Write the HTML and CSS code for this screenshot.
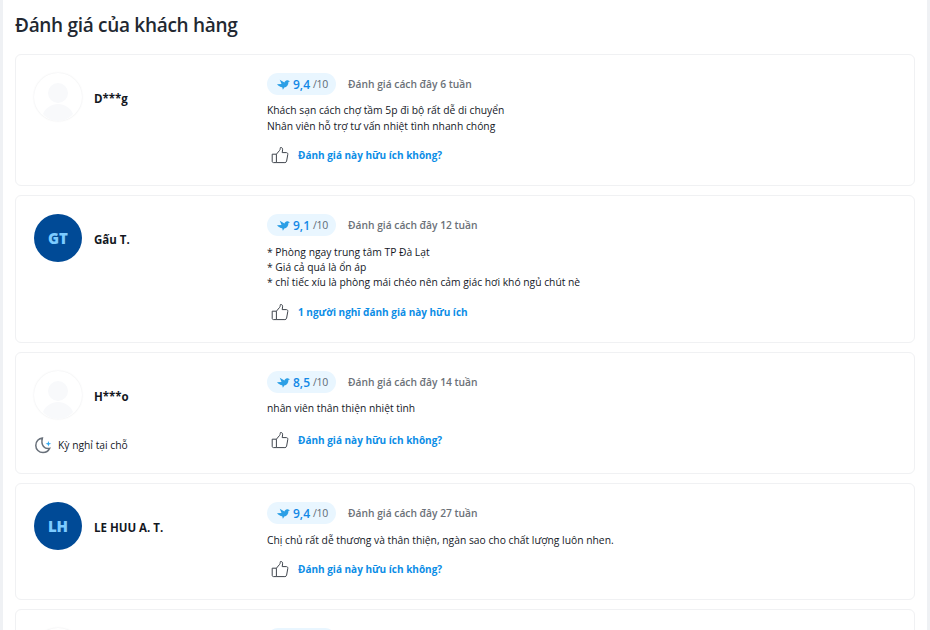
FILE: index.html
```html
<!DOCTYPE html>
<html lang="vi">
<head>
<meta charset="utf-8">
<title>Đánh giá của khách hàng</title>
<link rel="stylesheet" href="styles.css">
</head>
<body>
<svg class="defs" width="0" height="0" aria-hidden="true">
  <symbol id="bird" viewBox="0 0 15 12">
    <path d="M0 5.6 L5.2 5.4 L3.2 0.6 L8.6 3.6 C9.2 1.8 10.8 0.6 12.4 1.2 L15 2.2 L13.2 3.2 C13.4 6.6 11.2 9 8.4 9.6 L6.8 12 L6 9.2 C3.8 8.8 1.8 7.6 0 5.6 Z"/>
  </symbol>
  <symbol id="thumb" viewBox="0 0 18 18">
    <path d="M1.2 8.2 H5.4 V16.6 H2.4 C1.7 16.6 1.2 16.1 1.2 15.4 Z M5.4 8.2 L8.6 4.4 C9 3.9 9.2 3.2 9.2 2.6 L9.4 1.6 C10.8 1.2 11.8 2.2 11.6 3.8 L11.2 6.6 H15.4 C16.4 6.6 17 7.4 16.8 8.4 L15.6 15.2 C15.4 16.1 14.8 16.6 13.9 16.6 H5.4" />
  </symbol>
  <symbol id="person" viewBox="0 0 48 48">
    <circle cx="24" cy="20" r="10"/>
    <path d="M9 41 C11 35.5 17 31 24 31 C31 31 37 35.5 39 41 C35 45.8 30 48 24 48 C18 48 13 45.8 9 41 Z"/>
  </symbol>
</svg>
<main class="panel">
  <h2 class="title">Đánh giá của khách hàng</h2>

  <article class="card">
    <div class="author">
      <div class="who">
        <div class="avatar ghost"><svg class="person"><use href="#person"/></svg></div>
        <span class="name">D***g</span>
      </div>
    </div>
    <div class="review">
      <div class="meta">
        <span class="score"><svg class="bird"><use href="#bird"/></svg><b>9,4</b><small>/10</small></span>
        <span class="date">Đánh giá cách đây 6 tuần</span>
      </div>
      <p class="text">Khách sạn cách chợ tầm 5p đi bộ rất dễ di chuyển<br>Nhân viên hỗ trợ tư vấn nhiệt tình nhanh chóng</p>
      <div class="helpful"><svg class="thumb"><use href="#thumb"/></svg><a class="link">Đánh giá này hữu ích không?</a></div>
    </div>
  </article>

  <article class="card">
    <div class="author">
      <div class="who">
        <div class="avatar">GT</div>
        <span class="name">Gấu T.</span>
      </div>
    </div>
    <div class="review">
      <div class="meta">
        <span class="score"><svg class="bird"><use href="#bird"/></svg><b>9,1</b><small>/10</small></span>
        <span class="date">Đánh giá cách đây 12 tuần</span>
      </div>
      <p class="text">* Phòng ngay trung tâm TP Đà Lạt<br>* Giá cả quá là ổn áp<br>* chỉ tiếc xíu là phòng mái chéo nên cảm giác hơi khó ngủ chút nè</p>
      <div class="helpful"><svg class="thumb"><use href="#thumb"/></svg><a class="link">1 người nghĩ đánh giá này hữu ích</a></div>
    </div>
  </article>

  <article class="card">
    <div class="author">
      <div class="who">
        <div class="avatar ghost"><svg class="person"><use href="#person"/></svg></div>
        <span class="name">H***o</span>
      </div>
      <div class="stay">
        <svg class="moon" viewBox="0 0 18 18"><path class="moon-body" d="M8.4 2 C4.8 2.4 1.8 5.4 1.8 9.4 C1.8 13.4 5 16.6 9 16.6 C12 16.6 14.4 15 15.6 12.4 C11 13.4 6.4 9.6 8.4 2 Z"/><path class="moon-star" d="M14.4 5 L15.1 7.1 L17.2 7.8 L15.1 8.5 L14.4 10.6 L13.7 8.5 L11.6 7.8 L13.7 7.1 Z"/></svg>
        <span>Kỳ nghỉ tại chỗ</span>
      </div>
    </div>
    <div class="review">
      <div class="meta">
        <span class="score"><svg class="bird"><use href="#bird"/></svg><b>8,5</b><small>/10</small></span>
        <span class="date">Đánh giá cách đây 14 tuần</span>
      </div>
      <p class="text">nhân viên thân thiện nhiệt tình</p>
      <div class="helpful helpful-low"><svg class="thumb"><use href="#thumb"/></svg><a class="link">Đánh giá này hữu ích không?</a></div>
    </div>
  </article>

  <article class="card">
    <div class="author">
      <div class="who">
        <div class="avatar">LH</div>
        <span class="name">LE HUU A. T.</span>
      </div>
    </div>
    <div class="review">
      <div class="meta">
        <span class="score"><svg class="bird"><use href="#bird"/></svg><b>9,4</b><small>/10</small></span>
        <span class="date">Đánh giá cách đây 27 tuần</span>
      </div>
      <p class="text">Chị chủ rất dễ thương và thân thiện, ngàn sao cho chất lượng luôn nhen.</p>
      <div class="helpful"><svg class="thumb"><use href="#thumb"/></svg><a class="link">Đánh giá này hữu ích không?</a></div>
    </div>
  </article>

  <article class="card">
    <div class="author">
      <div class="who">
        <div class="avatar ghost"><svg class="person"><use href="#person"/></svg></div>
      </div>
    </div>
    <div class="review">
      <div class="meta">
        <span class="score"></span>
      </div>
    </div>
  </article>
</main>
</body>
</html>
```

FILE: styles.css
```css
* { box-sizing: border-box; }

html, body {
  margin: 0;
  height: 630px;
  overflow: hidden;
}

body {
  background: #eff1f4;
  font-family: "Open Sans", "Noto Sans", sans-serif;
  color: #14181f;
}

.defs { position: absolute; }

.panel {
  margin: 0 3px;
  height: 630px;
  background: #fff;
  padding: 0 12px;
  overflow: hidden;
}

.title {
  margin: 0;
  padding-top: 12px;
  height: 54px;
  font-size: 19px;
  line-height: 27px;
  font-weight: 600;
  letter-spacing: -0.3px;
  color: #222831;
}

.card {
  display: flex;
  margin-bottom: 9.2px;
  padding: 18px 18px 19px;
  border: 1px solid #f0f1f3;
  border-radius: 6px;
  background: #fff;
}

.author {
  width: 233px;
  flex: none;
}

.who {
  display: flex;
  align-items: center;
  gap: 12px;
}

.avatar {
  width: 48px;
  height: 48px;
  flex: none;
  border-radius: 50%;
  background: #004a96;
  color: #7ccbff;
  font-size: 15px;
  font-weight: 800;
  line-height: 48px;
  text-align: center;
  overflow: hidden;
}

.avatar.ghost {
  background: #fff;
  box-shadow: 0 0 2px rgba(20, 30, 50, 0.1);
}

.person {
  display: block;
  width: 48px;
  height: 48px;
  fill: #f8f9fb;
}

.name {
  padding-top: 2px;
  font-size: 11.5px;
  font-weight: 700;
  line-height: 15px;
  color: #14181f;
}

.stay {
  display: flex;
  align-items: center;
  gap: 6px;
  margin-top: 17px;
  font-size: 10.3px;
  line-height: 18px;
  color: #14181f;
}

.moon {
  width: 18px;
  height: 18px;
  flex: none;
}

.moon-body {
  fill: none;
  stroke: #68707a;
  stroke-width: 1.5;
}

.moon-star { fill: #2ea7f0; }

.review {
  flex: 1;
  min-width: 0;
}

.meta {
  display: flex;
  align-items: center;
  gap: 12px;
  height: 22px;
}

.score {
  display: flex;
  align-items: center;
  height: 22px;
  width: 69px;
  padding-left: 10px;
  border-radius: 11px;
  background: #e9f6ff;
  white-space: nowrap;
}

.bird {
  width: 13px;
  height: 11px;
  margin-right: 3px;
  fill: #2b9fe6;
}

.score b {
  font-size: 12px;
  font-weight: 600;
  color: #1388e6;
}

.score small {
  margin-left: 3px;
  font-size: 10.5px;
  letter-spacing: -0.3px;
  color: #5f6a75;
}

.date {
  font-size: 10.25px;
  font-weight: 600;
  color: #6b7178;
}

.text {
  margin: 8.2px 0 0;
  font-size: 10.3px;
  line-height: 15.4px;
  color: #14181f;
}

.helpful {
  display: flex;
  align-items: center;
  gap: 9px;
  height: 22px;
  margin-top: 10.2px;
  padding-left: 4px;
}

.helpful-low { margin-top: 12px; }

.thumb {
  width: 18px;
  height: 18px;
  flex: none;
  fill: none;
  stroke: #3f454d;
  stroke-width: 1;
  stroke-linejoin: round;
}

.link {
  font-size: 10px;
  font-weight: 700;
  color: #0b8de6;
}
```
